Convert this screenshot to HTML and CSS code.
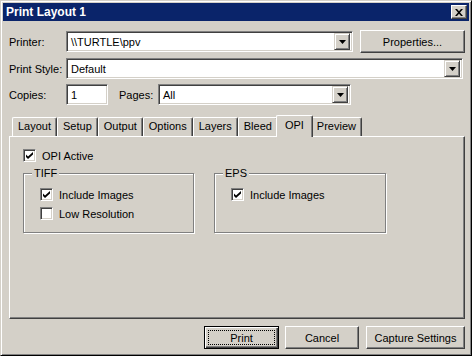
FILE: index.html
```html
<!DOCTYPE html>
<html>
<head>
    <title>Print Layout 1</title>
    <link rel="stylesheet" href="styles.css">
</head>
<body>
    <div class="window">
        <div class="titlebar">
            <span class="title">Print Layout 1</span>
            <button class="close">
                <svg width="8" height="7" viewBox="0 0 8 7"><path d="M0 0h2l2 2.3L6 0h2L5 3.5 8 7H6L4 4.7 2 7H0l3-3.5z" fill="#000"/></svg>
            </button>
        </div>

        <div class="content">
            <div class="row row-printer">
                <label class="field-label">Printer:</label>
                <div class="combo combo-printer">
                    <span class="value">\\TURTLE\ppv</span>
                    <span class="drop"><svg width="7" height="4" viewBox="0 0 7 4"><path d="M0 0h7L3.5 4z" fill="#000"/></svg></span>
                </div>
                <button class="btn btn-properties">Properties...</button>
            </div>

            <div class="row">
                <label class="field-label">Print Style:</label>
                <div class="combo combo-style">
                    <span class="value">Default</span>
                    <span class="drop"><svg width="7" height="4" viewBox="0 0 7 4"><path d="M0 0h7L3.5 4z" fill="#000"/></svg></span>
                </div>
            </div>

            <div class="row">
                <label class="field-label">Copies:</label>
                <div class="textbox copies">1</div>
                <label class="pages-label">Pages:</label>
                <div class="combo combo-pages">
                    <span class="value">All</span>
                    <span class="drop"><svg width="7" height="4" viewBox="0 0 7 4"><path d="M0 0h7L3.5 4z" fill="#000"/></svg></span>
                </div>
            </div>

            <div class="tabs">
                <div class="tab">Layout</div>
                <div class="tab">Setup</div>
                <div class="tab">Output</div>
                <div class="tab">Options</div>
                <div class="tab">Layers</div>
                <div class="tab">Bleed</div>
                <div class="tab active">OPI</div>
                <div class="tab">Preview</div>
            </div>

            <div class="panel">
                <div class="check-row">
                    <span class="checkbox checked"><svg width="7" height="7" viewBox="0 0 7 7"><path d="M0 2.5l2 2L7 0v2.5L2 7 0 5z" fill="#000"/></svg></span>
                    <span>OPI Active</span>
                </div>

                <div class="groups">
                    <fieldset class="group group-tiff">
                        <legend>TIFF</legend>
                        <div class="group-body">
                            <div class="check-row">
                                <span class="checkbox checked"><svg width="7" height="7" viewBox="0 0 7 7"><path d="M0 2.5l2 2L7 0v2.5L2 7 0 5z" fill="#000"/></svg></span>
                                <span>Include Images</span>
                            </div>
                            <div class="check-row">
                                <span class="checkbox"></span>
                                <span>Low Resolution</span>
                            </div>
                        </div>
                    </fieldset>

                    <fieldset class="group group-eps">
                        <legend>EPS</legend>
                        <div class="group-body">
                            <div class="check-row">
                                <span class="checkbox checked"><svg width="7" height="7" viewBox="0 0 7 7"><path d="M0 2.5l2 2L7 0v2.5L2 7 0 5z" fill="#000"/></svg></span>
                                <span>Include Images</span>
                            </div>
                        </div>
                    </fieldset>
                </div>
            </div>

            <div class="buttons">
                <button class="btn btn-print default">Print</button>
                <button class="btn btn-cancel">Cancel</button>
                <button class="btn btn-capture">Capture Settings</button>
            </div>
        </div>
    </div>
</body>
</html>
```

FILE: styles.css
```css
* {
    box-sizing: border-box;
}
body {
    margin: 0;
    background-color: #d4d0c8;
    font-family: "Liberation Sans", Arial, sans-serif;
    font-size: 11px;
    color: #000;
}
.window {
    width: 472px;
    height: 356px;
    background-color: #d4d0c8;
    border: 1px solid;
    border-color: #d4d0c8 #000 #000 #d4d0c8;
    box-shadow: inset 1px 1px #fff, inset -1px -1px #808080;
    padding: 2px;
    display: flex;
    flex-direction: column;
}
.titlebar {
    height: 18px;
    background-color: #0a246a;
    display: flex;
    align-items: center;
    justify-content: space-between;
    padding: 0 2px 0 3px;
}
.title {
    color: #fff;
    font-weight: bold;
    font-size: 12px;
}
.close {
    width: 16px;
    height: 14px;
    padding: 0;
    background-color: #d4d0c8;
    border: 1px solid;
    border-color: #fff #404040 #404040 #fff;
    box-shadow: inset -1px -1px #808080;
    display: flex;
    align-items: center;
    justify-content: center;
}
.content {
    padding: 9px 4px 0 6px;
}
.row {
    display: flex;
    align-items: center;
    height: 21px;
    margin-bottom: 5px;
}
.row-printer {
    height: 23px;
    margin-bottom: 5px;
}
.field-label {
    width: 57px;
}
.combo,
.textbox {
    height: 21px;
    background-color: #fff;
    border: 1px solid;
    border-color: #808080 #fff #fff #808080;
    box-shadow: inset 1px 1px #404040, inset -1px -1px #d4d0c8;
    padding: 2px;
    display: flex;
    align-items: center;
}
.combo .value {
    flex-grow: 1;
    padding-left: 2px;
}
.combo .drop {
    width: 16px;
    height: 17px;
    background-color: #d4d0c8;
    border: 1px solid;
    border-color: #d4d0c8 #404040 #404040 #d4d0c8;
    box-shadow: inset 1px 1px #fff, inset -1px -1px #808080;
    display: flex;
    align-items: center;
    justify-content: center;
}
.combo-printer {
    width: 287px;
}
.combo-style {
    width: 397px;
}
.textbox {
    padding-left: 4px;
}
.copies {
    width: 42px;
}
.pages-label {
    margin-left: 11px;
    width: 39px;
}
.combo-pages {
    width: 193px;
}
.btn {
    height: 23px;
    padding: 0;
    background-color: #d4d0c8;
    border: 1px solid;
    border-color: #fff #404040 #404040 #fff;
    box-shadow: inset -1px -1px #808080;
    font-family: inherit;
    font-size: 11px;
    color: #000;
}
.btn-properties {
    width: 105px;
    margin-left: 7px;
}
.tabs {
    display: flex;
    align-items: flex-end;
    height: 21px;
    margin-top: 10px;
    padding-left: 3px;
}
.tab {
    height: 19px;
    padding: 0 5px;
    line-height: 17px;
    border-top: 1px solid #fff;
    border-left: 1px solid #fff;
    border-right: 1px solid #404040;
    box-shadow: inset -1px 0 #808080;
    border-radius: 2px 2px 0 0;
}
.tab.active {
    height: 22px;
    margin: 0 -2px -1px;
    padding: 0 8px;
    line-height: 18px;
    background-color: #d4d0c8;
    position: relative;
    z-index: 1;
}
.panel {
    height: 183px;
    border: 1px solid;
    border-color: #fff #404040 #404040 #fff;
    box-shadow: inset -1px -1px #808080;
    padding: 12px 0 0 13px;
}
.check-row {
    display: flex;
    align-items: center;
    height: 13px;
}
.checkbox {
    width: 13px;
    height: 13px;
    margin-right: 6px;
    background-color: #fff;
    border: 1px solid;
    border-color: #808080 #fff #fff #808080;
    box-shadow: inset 1px 1px #404040, inset -1px -1px #d4d0c8;
    display: flex;
    align-items: center;
    justify-content: center;
}
.groups {
    display: flex;
    gap: 20px;
    margin-top: 5px;
}
.group {
    margin: 0;
    padding: 0;
    border: 1px solid #808080;
    box-shadow: inset 1px 1px #fff, 1px 1px #fff;
}
.group legend {
    margin-left: 8px;
    padding: 0 2px;
    background-color: #d4d0c8;
    line-height: 13px;
}
.group-tiff {
    width: 171px;
}
.group-eps {
    width: 172px;
}
.group-body {
    height: 52px;
    padding: 8px 0 0 16px;
}
.group-body .check-row {
    margin-bottom: 6px;
}
.buttons {
    display: flex;
    justify-content: flex-end;
    margin-top: 7px;
}
.btn-print {
    width: 75px;
}
.btn-cancel {
    width: 74px;
    margin-left: 6px;
}
.btn-capture {
    width: 99px;
    margin-left: 7px;
}
.btn.default {
    border: 1px solid #000;
    box-shadow: inset 1px 1px #fff, inset -1px -1px #404040, inset -2px -2px #808080;
    outline: 1px dotted #000;
    outline-offset: -5px;
}
```
